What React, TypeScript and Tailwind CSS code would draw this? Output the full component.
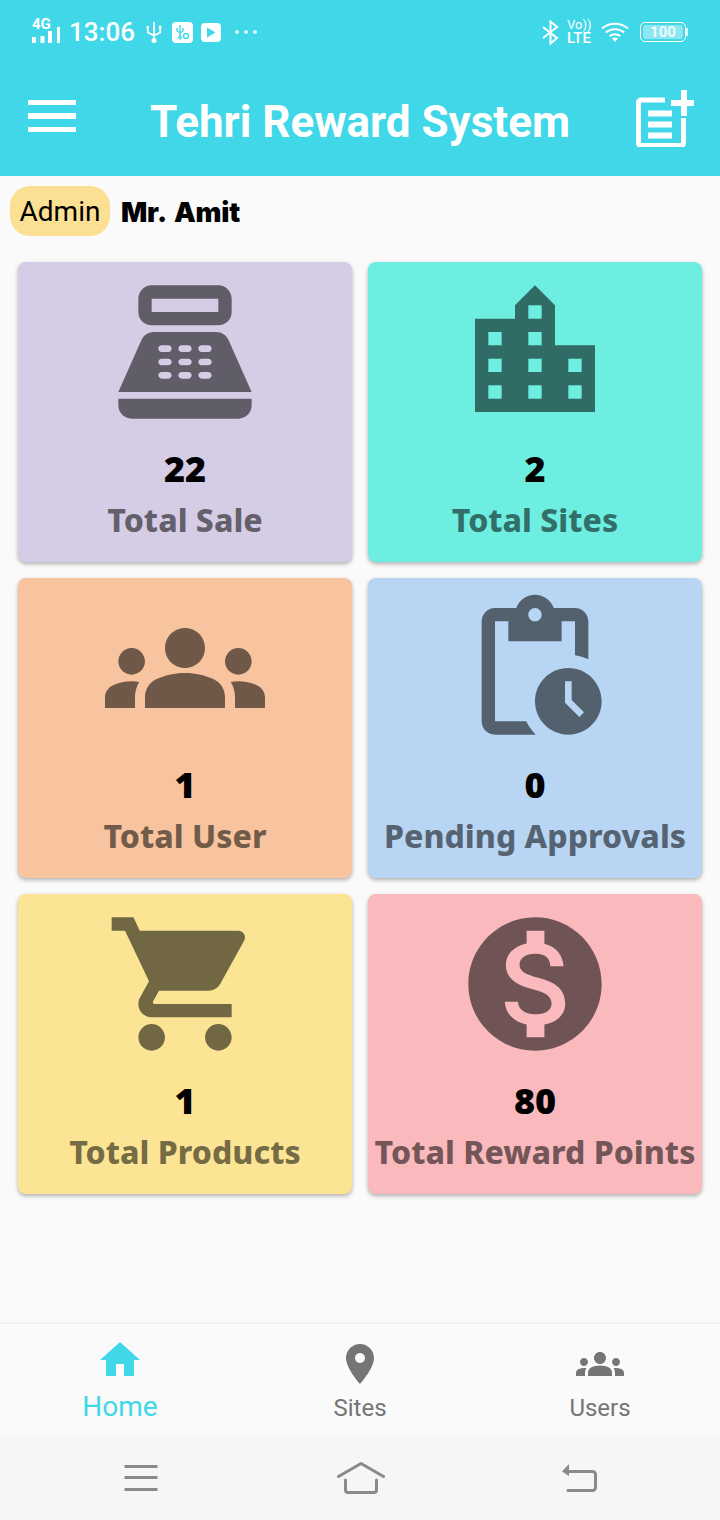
const ICONS = {
  sale: "M17 2H7c-1.1 0-2 .9-2 2v2c0 1.1.9 2 2 2h10c1.1 0 2-.9 2-2V4c0-1.1-.9-2-2-2zm0 4H7V4h10v2zm3 16H4c-1.1 0-2-.9-2-2v-1h20v1c0 1.1-.9 2-2 2zm-1.47-11.81C18.21 9.47 17.49 9 16.7 9H7.3c-.79 0-1.51.47-1.83 1.19L2 18h20l-3.47-7.81zM9.5 16h-1c-.28 0-.5-.22-.5-.5s.22-.5.5-.5h1c.28 0 .5.22.5.5s-.22.5-.5.5zm0-2h-1c-.28 0-.5-.22-.5-.5s.22-.5.5-.5h1c.28 0 .5.22.5.5s-.22.5-.5.5zm0-2h-1c-.28 0-.5-.22-.5-.5s.22-.5.5-.5h1c.28 0 .5.22.5.5s-.22.5-.5.5zm3 4h-1c-.28 0-.5-.22-.5-.5s.22-.5.5-.5h1c.28 0 .5.22.5.5s-.22.5-.5.5zm0-2h-1c-.28 0-.5-.22-.5-.5s.22-.5.5-.5h1c.28 0 .5.22.5.5s-.22.5-.5.5zm0-2h-1c-.28 0-.5-.22-.5-.5s.22-.5.5-.5h1c.28 0 .5.22.5.5s-.22.5-.5.5zm3 4h-1c-.28 0-.5-.22-.5-.5s.22-.5.5-.5h1c.28 0 .5.22.5.5s-.22.5-.5.5zm0-2h-1c-.28 0-.5-.22-.5-.5s.22-.5.5-.5h1c.28 0 .5.22.5.5s-.22.5-.5.5zm0-2h-1c-.28 0-.5-.22-.5-.5s.22-.5.5-.5h1c.28 0 .5.22.5.5s-.22.5-.5.5z",
  city: "M15 11V5l-3-3-3 3v2H3v14h18V11h-6zm-8 8H5v-2h2v2zm0-4H5v-2h2v2zm0-4H5V9h2v2zm6 8h-2v-2h2v2zm0-4h-2v-2h2v2zm0-4h-2V9h2v2zm0-4h-2V5h2v2zm6 12h-2v-2h2v2zm0-4h-2v-2h2v2z",
  groups: "M12 12.75c1.63 0 3.07.39 4.24.9 1.08.48 1.76 1.56 1.76 2.73V18H6v-1.61c0-1.18.68-2.26 1.76-2.73 1.17-.52 2.61-.91 4.24-.91zM4 13c1.1 0 2-.9 2-2s-.9-2-2-2-2 .9-2 2 .9 2 2 2zm1.13 1.1c-.37-.06-.74-.1-1.13-.1-.99 0-1.93.21-2.78.58C.48 14.9 0 15.62 0 16.43V18h4.5v-1.61c0-.83.23-1.61.63-2.29zM20 13c1.1 0 2-.9 2-2s-.9-2-2-2-2 .9-2 2 .9 2 2 2zm4 3.43c0-.81-.48-1.53-1.22-1.85-.85-.37-1.79-.58-2.78-.58-.39 0-.76.04-1.13.1.4.68.63 1.46.63 2.29V18H24v-1.57zM12 6c1.66 0 3 1.34 3 3s-1.34 3-3 3-3-1.34-3-3 1.34-3 3-3z",
  pending: "M17 12c-2.76 0-5 2.24-5 5s2.24 5 5 5 5-2.24 5-5-2.24-5-5-5zm1.65 7.35L16.5 17.2V14h1v2.79l1.85 1.85-.7.71zM18 3h-3.18C14.4 1.84 13.3 1 12 1s-2.4.84-2.82 2H6c-1.1 0-2 .9-2 2v15c0 1.1.9 2 2 2h6.11c-.59-.57-1.07-1.25-1.42-2H6V5h2v3h8V5h2v5.08c.71.1 1.38.31 2 .6V5c0-1.1-.9-2-2-2zm-6 2c-.55 0-1-.45-1-1s.45-1 1-1 1 .45 1 1-.45 1-1 1z",
  cart: "M7 18c-1.1 0-1.99.9-1.99 2S5.9 22 7 22s2-.9 2-2-.9-2-2-2zM1 2v2h2l3.6 7.59-1.35 2.45c-.16.28-.25.61-.25.96 0 1.1.9 2 2 2h12v-2H7.42c-.14 0-.25-.11-.25-.25l.03-.12.9-1.63h7.45c.75 0 1.41-.41 1.75-1.03l3.58-6.49c.08-.14.12-.31.12-.48 0-.55-.45-1-1-1H5.21l-.94-2H1zm16 16c-1.1 0-1.99.9-1.99 2s.89 2 1.99 2 2-.9 2-2-.9-2-2-2z",
  money: "M12 2C6.48 2 2 6.48 2 12s4.48 10 10 10 10-4.48 10-10S17.52 2 12 2zm1.41 16.09V20h-2.67v-1.93c-1.71-.36-3.16-1.46-3.27-3.4h1.96c.1 1.05.82 1.87 2.65 1.87 1.96 0 2.4-.98 2.4-1.59 0-.83-.44-1.61-2.67-2.14-2.48-.6-4.18-1.62-4.18-3.67 0-1.72 1.39-2.84 3.11-3.21V4h2.67v1.95c1.86.45 2.79 1.86 2.87 3.39H14.3c-.05-1.11-.64-1.87-2.22-1.87-1.5 0-2.4.68-2.4 1.64 0 .84.65 1.39 2.67 1.91s4.18 1.39 4.18 3.91c-.01 1.83-1.38 2.83-3.12 3.16z",
  home: "M10 20v-6h4v6h5v-8h3L12 3 2 12h3v8z",
  pin: "M12 2C8.13 2 5 5.13 5 9c0 5.25 7 13 7 13s7-7.75 7-13c0-3.87-3.13-7-7-7zm0 9.5c-1.38 0-2.5-1.12-2.5-2.5s1.12-2.5 2.5-2.5 2.5 1.12 2.5 2.5-1.12 2.5-2.5 2.5z",
};

const CARDS = [
  { icon: ICONS.sale, n: "22", label: "Total Sale", bg: "bg-[#d5cde6]" },
  { icon: ICONS.city, n: "2", label: "Total Sites", bg: "bg-[#6deee0]" },
  { icon: ICONS.groups, n: "1", label: "Total User", bg: "bg-[#f7c49f]" },
  { icon: ICONS.pending, n: "0", label: "Pending Approvals", bg: "bg-[#b8d5f4]" },
  { icon: ICONS.cart, n: "1", label: "Total Products", bg: "bg-[#fbe594]" },
  { icon: ICONS.money, n: "80", label: "Total Reward Points", bg: "bg-[#f9b9bd]" },
];

function MIcon({ d, size, className }: { d: string; size: number; className?: string }) {
  return (
    <svg width={size} height={size} viewBox="0 0 24 24" fill="currentColor" fillRule="evenodd" className={className}>
      <path d={d} />
    </svg>
  );
}

function StatusBar() {
  return (
    <div className="flex h-[64px] items-center justify-between pl-[31px] pr-[32px] text-white">
      <div className="flex items-center">
        <div className="relative h-[28px] w-[30px]">
          <span className="absolute left-[1px] top-[-3px] font-['Roboto'] text-[15px] font-bold leading-[18px]">4G</span>
          <svg width="30" height="28" viewBox="0 0 30 28" fill="white" className="absolute left-0 top-0">
            <rect x="1" y="19" width="4" height="6" />
            <rect x="9.500" y="18" width="4" height="7" />
            <rect x="17" y="13" width="4" height="12" />
            <rect x="26" y="9" width="3" height="16" />
          </svg>
        </div>
        <span className="ml-[8px] font-['Roboto'] text-[26px] font-medium leading-[32px]">13:06</span>
        <svg width="16" height="22" viewBox="0 0 16 22" fill="none" stroke="white" strokeWidth="1.8" className="ml-[11px]">
          <path d="M8 1v20M1.8 7v4.500L8 14.500 14.200 11.500V7" />
          <circle cx="8" cy="19.500" r="1.600" fill="white" />
          <rect x="0.500" y="5" width="2.600" height="2.600" fill="white" stroke="none" />
          <circle cx="14.200" cy="6" r="1.500" fill="white" stroke="none" />
        </svg>
        <div className="ml-[10px] flex h-[21px] w-[21px] items-center justify-center rounded-[4px] bg-white">
          <svg width="17" height="17" viewBox="0 0 17 17" fill="none" stroke="#40d8e8" strokeWidth="1.400">
            <path d="M6 1v11M3 4v3l3 2 3-2V4" />
            <circle cx="6" cy="13.500" r="1.200" />
            <circle cx="12" cy="12" r="2.500" />
          </svg>
        </div>
        <div className="ml-[8px] flex h-[19px] w-[20px] items-center justify-center rounded-[4px] bg-white">
          <svg width="10" height="11" viewBox="0 0 10 11" fill="#40d8e8">
            <path d="M1 0.500l8.500 5-8.500 5z" />
          </svg>
        </div>
        <div className="ml-[14px] flex items-center gap-[5px]">
          <span className="h-[4px] w-[4px] rounded-full bg-white/80" />
          <span className="h-[4px] w-[4px] rounded-full bg-white/80" />
          <span className="h-[4px] w-[4px] rounded-full bg-white/80" />
        </div>
      </div>
      <div className="flex items-center">
        <svg width="17" height="25" viewBox="0 0 17 25" fill="none" stroke="white" strokeWidth="2">
          <path d="M1 7l14 11-6.500 5.500V1.500L15 7 1 18" />
        </svg>
        <div className="ml-[8px] flex w-[25px] flex-col font-['Roboto'] leading-[12px] text-white">
          <span className="whitespace-nowrap text-[13px] leading-[12px]">Vo))</span>
          <span className="text-[15px] font-medium leading-[14px]">LTE</span>
        </div>
        <svg width="28" height="20" viewBox="0 0 28 20" fill="none" stroke="white" strokeWidth="2" className="ml-[9px]">
          <path d="M1 6.500C8.500 0 19.500 0 27 6.500M4.800 10.500C10 6 18 6 23.200 10.500M8.600 14c3-2.300 7.800-2.300 10.800 0" />
          <path d="M11 16.500c1.800-1.200 4.200-1.200 6 0L14 20z" fill="white" stroke="none" />
        </svg>
        <div className="ml-[11px] flex items-center">
          <div className="flex h-[20px] w-[46px] items-center justify-center rounded-[5px] border border-white p-[2px]">
            <div className="flex h-full w-full items-center justify-center rounded-[3px] bg-white/40 font-['Roboto'] text-[15px] font-bold leading-none text-white/85">100</div>
          </div>
          <span className="h-[8px] w-[2px] bg-white/80" />
        </div>
      </div>
    </div>
  );
}

function Toolbar() {
  return (
    <div className="flex h-[112px] items-center justify-between pl-[28px] pr-[26px] text-white">
      <div className="mb-[8px] flex w-[48px] flex-col gap-[8px]">
        <span className="h-[5px] bg-white" />
        <span className="h-[6px] bg-white" />
        <span className="h-[5px] bg-white" />
      </div>
      <h1 className="ml-[8px] mt-[4px] font-['Roboto'] text-[44px] font-bold leading-[50px]">Tehri Reward System</h1>
      <svg width="58" height="58" viewBox="0 0 58 58" fill="none" stroke="white" strokeWidth="5" className="mb-[5px]">
        <path d="M29 11H5a2.500 2.500 0 0 0-2.500 2.500v41a2 2 0 0 0 2 2h41a2 2 0 0 0 2-2V29" strokeLinejoin="round" />
        <path d="M12 24.500h24M12 35.500h24M12 46.500h24" strokeWidth="6" />
        <path d="M48 1v26M35 14h23" strokeWidth="6" />
      </svg>
    </div>
  );
}

function Card({ icon, n, label, bg }: { icon: string; n: string; label: string; bg: string }) {
  return (
    <div className={`flex h-[300px] flex-col items-center rounded-[8px] pt-[10px] shadow-[0_2px_4px_rgba(0,0,0,0.3)] ${bg}`}>
      <MIcon d={icon} size={160} className="text-black/55" />
      <div className="mt-[17px] font-['Noto_Sans'] text-[36px] font-black leading-[40px] text-black">{n}</div>
      <div className="mt-[11px] whitespace-nowrap font-['Noto_Sans'] text-[32px] font-extrabold leading-[40px] text-black/55">{label}</div>
    </div>
  );
}

function Tab({ d, label, active, raised, size = 48 }: { d: string; label: string; active?: boolean; raised?: boolean; size?: number }) {
  return (
    <div className={`flex flex-1 flex-col items-center ${active ? "text-[#40d8e8]" : "text-[#757575]"}`}>
      <MIcon d={d} size={size} className={raised ? "mt-[12px]" : "mt-[16px]"} />
      <span className={`font-['Roboto'] ${active ? "mt-[5px] text-[28px] leading-[36px]" : "mt-[3px] text-[24px] leading-[34px]"}`}>{label}</span>
    </div>
  );
}

export default function App() {
  return (
    <div className="flex h-[1520px] w-[720px] flex-col overflow-hidden bg-[#fafafa]">
      <header className="h-[176px] bg-[#40d8e8]">
        <StatusBar />
        <Toolbar />
      </header>
      <div className="flex h-[86px] items-start pl-[10px] pt-[10px]">
        <span className="flex h-[50px] w-[100px] items-center justify-center rounded-[20px] bg-[#fbe094] pt-[2px] font-['Roboto'] text-[28px] text-black">Admin</span>
        <span className="ml-[11px] font-['Inter'] text-[27.500px] font-black leading-[52px] tracking-[-0.200px] text-black [word-spacing:3px]">Mr. Amit</span>
      </div>
      <main className="grid flex-1 grid-cols-2 content-start gap-[16px] px-[18px]">
        {CARDS.map((c) => (
          <Card key={c.label} {...c} />
        ))}
      </main>
      <nav className="flex h-[114px] border-t-2 border-[#f1f1f1] bg-[#fafafa]">
        <Tab d={ICONS.home} label="Home" active raised />
        <Tab d={ICONS.pin} label="Sites" />
        <Tab d={ICONS.groups} label="Users" />
      </nav>
      <div className="flex h-[84px] items-center justify-between bg-[#f6f6f6] pb-[1px] pl-[124px] pr-[123px]">
        <svg width="34" height="26" viewBox="0 0 34 26" fill="#8a8a8a">
          <rect x="0.500" y="0" width="33" height="3" />
          <rect x="0.500" y="11" width="33" height="3" />
          <rect x="0.500" y="23" width="33" height="3" />
        </svg>
        <svg width="48" height="32" viewBox="0 0 48 32" fill="none" stroke="#8a8a8a" strokeWidth="3" strokeLinecap="round" strokeLinejoin="round" className="ml-[3px]">
          <path d="M1.500 14.500L24 1.500 46.500 14.500" />
          <path d="M8.500 18v10a2.500 2.500 0 0 0 2.500 2.500h26a2.500 2.500 0 0 0 2.500-2.500V18" />
        </svg>
        <svg width="36" height="30" viewBox="0 0 36 30" fill="none" stroke="#8a8a8a" strokeWidth="3" strokeLinecap="round" strokeLinejoin="round">
          <path d="M6 8.500h25.500a3 3 0 0 1 3 3v13a3 3 0 0 1-3 3H7" />
          <path d="M8 1v12L1 8.500z" fill="#8a8a8a" stroke="none" />
        </svg>
      </div>
    </div>
  );
}
